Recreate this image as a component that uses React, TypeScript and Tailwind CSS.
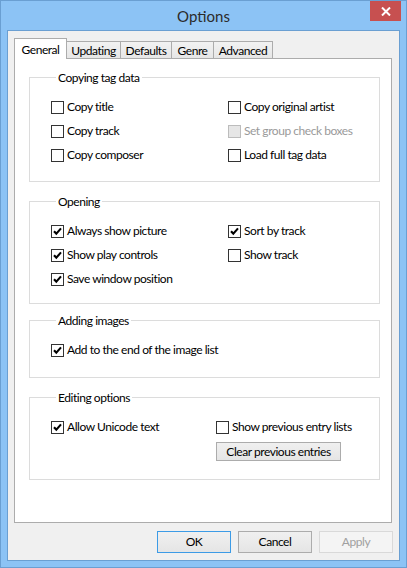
import * as React from "react";

type Item = { label: string; checked?: boolean; disabled?: boolean };

function Check({ label, checked, disabled }: Item) {
  return (
    <label className="flex h-[24px] items-center gap-[3px] whitespace-nowrap">
      <span
        className={
          disabled
            ? "flex size-[13px] shrink-0 items-center justify-center border border-[#bcbcbc] bg-[#e6e6e6]"
            : "flex size-[13px] shrink-0 items-center justify-center border border-[#333333] bg-white"
        }
      >
        {checked && (
          <svg width="11" height="11" viewBox="0 0 11 11">
            <path d="M2 5.2 L4.3 7.6 L9 2.4" fill="none" stroke="#000" strokeWidth="2.1" />
          </svg>
        )}
      </span>
      <span className={disabled ? "text-[#9a9a9a]" : "text-black"}>{label}</span>
    </label>
  );
}

function Group({ title, className, children }: { title: string; className: string; children: React.ReactNode }) {
  return (
    <fieldset className={`w-[351px] border border-[#dcdcdc] pl-[21px] ${className}`}>
      <legend className="ml-[5px] px-[2px] text-[12px] leading-[15px]">{title}</legend>
      {children}
    </fieldset>
  );
}

const TABS = [
  { name: "General", w: "w-[53px]" },
  { name: "Updating", w: "w-[55px]" },
  { name: "Defaults", w: "w-[52px]" },
  { name: "Genre", w: "w-[43px]" },
  { name: "Advanced", w: "w-[60px]" },
];

function DlgButton({ label, kind }: { label: string; kind: "default" | "normal" | "disabled" }) {
  const cls =
    kind === "default"
      ? "border-[#3c9be6] bg-linear-to-b from-[#f0f0f0] to-[#e5e5e5] text-black"
      : kind === "normal"
        ? "border-[#acacac] bg-linear-to-b from-[#f0f0f0] to-[#e5e5e5] text-black"
        : "border-[#d9d9d9] bg-[#f4f4f4] text-[#a0a0a0]";
  return (
    <div className={`flex h-[22px] w-[74px] items-center justify-center border ${cls}`}>{label}</div>
  );
}

export default function App() {
  return (
    <div className="flex h-[568px] w-[407px] flex-col border border-[#6a9fd2] bg-[#8cc3f5] font-['Lato',sans-serif] text-[12px] tracking-[-0.45px] text-black">
      {/* title bar */}
      <div className="grid h-[29px] grid-cols-[1fr_auto_1fr] items-start">
        <div />
        <div className="mt-[5px] text-[15px] leading-[20px] tracking-normal text-[#2b2b2b]">Options</div>
        <div className="flex justify-end pr-[5px]">
          <div className="flex h-[20px] w-[31px] items-center justify-center bg-[#c75050]">
            <svg width="10" height="9" viewBox="0 0 10 9">
              <path d="M1 0.5 L9 8.5 M9 0.5 L1 8.5" stroke="#fff" strokeWidth="2" />
            </svg>
          </div>
        </div>
      </div>

      {/* client area */}
      <div className="mx-[6px] flex h-[531px] flex-col border border-[#6a9fd2] bg-[#f0f0f0] pt-[7px] pl-[6px]">
        <div className="flex h-[20px] items-end">
          {TABS.map((t, i) =>
            i === 0 ? (
              <div
                key={t.name}
                className={`relative z-10 -mb-px flex h-[21px] ${t.w} items-start justify-center border border-b-0 border-[#acacac] bg-white pt-[2px]`}
              >
                {t.name}
              </div>
            ) : (
              <div
                key={t.name}
                className={`-ml-px flex h-[17px] ${t.w} items-center justify-center border border-b-0 border-[#acacac] bg-linear-to-b from-[#f2f2f2] to-[#e6e6e6] pt-[1px]`}
              >
                {t.name}
              </div>
            ),
          )}
        </div>

        <div className="flex h-[465px] w-[378px] flex-col border border-[#acacac] bg-white pl-[14px]">
          <Group title="Copying tag data" className="mt-[11px] pt-[10px] pb-[14px]">
            <div className="grid grid-cols-[177px_1fr]">
              <Check label="Copy title" />
              <Check label="Copy original artist" />
              <Check label="Copy track" />
              <Check label="Set group check boxes" disabled />
              <Check label="Copy composer" />
              <Check label="Load full tag data" />
            </div>
          </Group>

          <Group title="Opening" className="mt-[12px] pt-[10px] pb-[12px]">
            <div className="grid grid-cols-[177px_1fr]">
              <Check label="Always show picture" checked />
              <Check label="Sort by track" checked />
              <Check label="Show play controls" checked />
              <Check label="Show track" />
              <Check label="Save window position" checked />
            </div>
          </Group>

          <Group title="Adding images" className="mt-[9px] pt-[10px] pb-[15px]">
            <Check label="Add to the end of the image list" checked />
          </Group>

          <Group title="Editing options" className="mt-[12px] pt-[10px] pb-[18px]">
            <div className="grid grid-cols-[165px_1fr]">
              <Check label="Allow Unicode text" checked />
              <div className="flex flex-col">
                <Check label="Show previous entry lists" />
                <div className="mt-[3px] flex h-[19px] w-[125px] items-center justify-center border border-[#acacac] bg-linear-to-b from-[#f0f0f0] to-[#e5e5e5]">
                  Clear previous entries
                </div>
              </div>
            </div>
          </Group>
        </div>

        <div className="mt-[8px] flex justify-end gap-[7px] pr-[6px]">
          <DlgButton label="OK" kind="default" />
          <DlgButton label="Cancel" kind="normal" />
          <DlgButton label="Apply" kind="disabled" />
        </div>
      </div>
    </div>
  );
}
